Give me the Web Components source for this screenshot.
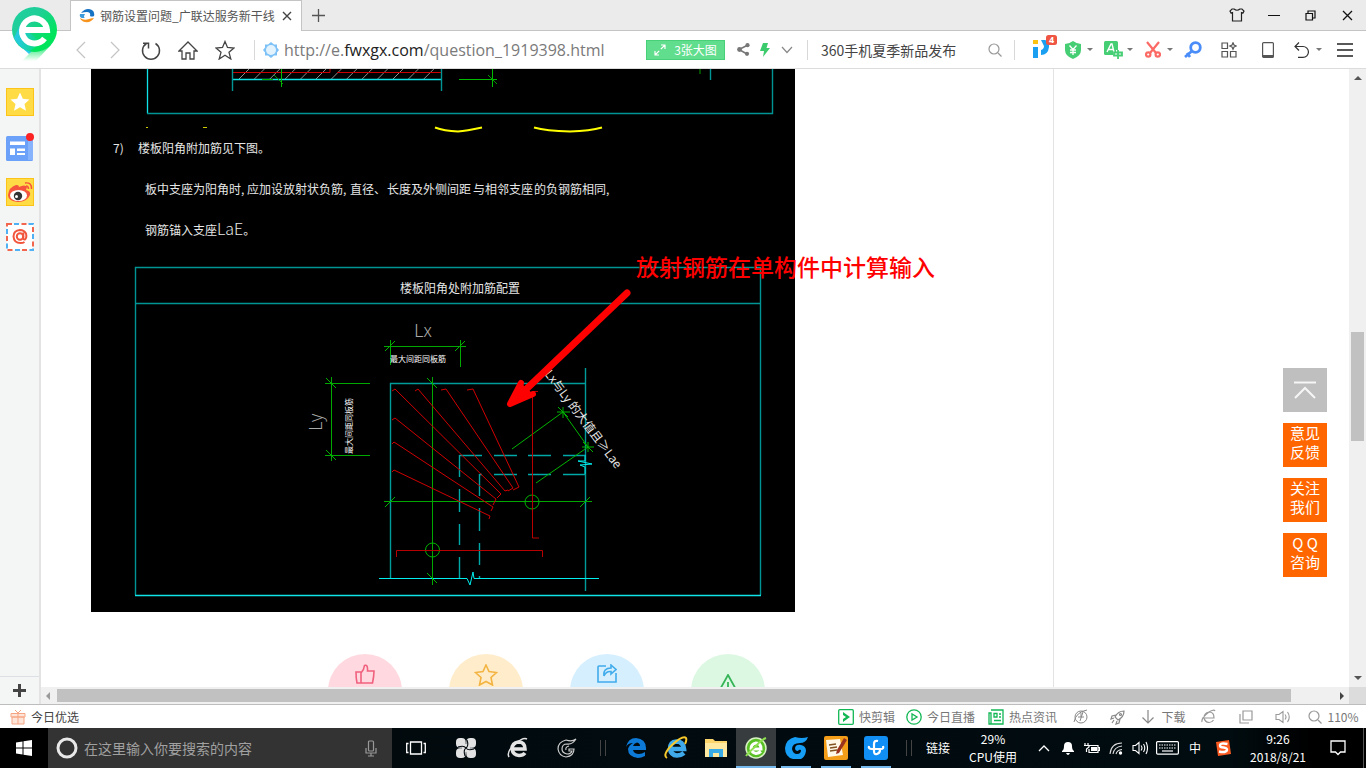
<!DOCTYPE html>
<html lang="zh-CN">
<head>
<meta charset="utf-8">
<title>钢筋设置问题_广联达服务新干线</title>
<style>
html,body{margin:0;height:100%}
body{font:12px/16px "Noto Sans CJK SC",sans-serif;color:#444;overflow:hidden}
</style>
</head>
<body>
<browser-app></browser-app>
<script>
const define = (name, html, init) => customElements.define(name, class extends HTMLElement {
  connectedCallback() {
    if (this.shadowRoot) return;
    const root = this.attachShadow({ mode: 'open' });
    const t = document.createElement('template');
    t.innerHTML = html;
    root.append(t.content.cloneNode(true));
    if (init) init(this, root);
  }
});

const line = (c, w, d) => `<g fill="none" stroke="${c}" stroke-width="${w}">${d}</g>`;
/* name: [width, height, markup] */
const ICONS = {
  logo: [45, 55, `<defs><linearGradient id="a" x1="0" y1="0" x2="1" y2="1"><stop offset="0" stop-color="#1fd0a0"/><stop offset=".35" stop-color="#1fce98"/><stop offset=".75" stop-color="#00e45c"/></linearGradient><linearGradient id="b" x1="0" y1="0" x2="0" y2="1"><stop offset=".2" stop-color="#00e45c"/><stop offset="1" stop-color="#fff"/></linearGradient><linearGradient id="c" x1="0" y1="0" x2="1" y2="0"><stop offset="0" stop-color="#25c9e8"/><stop offset="1" stop-color="#25c9e8" stop-opacity="0"/></linearGradient></defs><path d="M5 36L17 47 38 36z" fill="#2cc8f0"/><path d="M10 54L26 38 42 32 38 39 24 54z" fill="url(#b)"/><circle cx="22.500" cy="22.500" r="22.500" fill="url(#a)"/><path d="M2 31Q5 37 10 41L16 45 30 36 8 18z" fill="url(#c)"/><path d="M13 23H35A12.500 12.500 0 1 0 32.500 31.500" fill="none" stroke="#fff" stroke-width="6"/>`],
  fav: [16, 14, `<path d="M2 4Q7-2 13 1 16 3 15 7 13 8 11 7 12 3 8 3 5 3 2 4z" fill="#1673c4"/><path d="M1 5H6Q4 8 6 9H3Q0 8 1 5z" fill="#3c9adb"/><path d="M1 9Q5 12 10 10 13 9 15 9 12 14 6 13 2 12 1 9z" fill="#f7941e"/>`],
  close: [10, 10, line('#444', 1.4, '<path d="M1 1L9 9M9 1L1 9"/>')],
  plus: [13, 13, line('#555', 1.3, '<path d="M6.500 0V13M0 6.500H13"/>')],
  shirt: [16, 14, line('#222', 1.2, '<path d="M5 1Q8 3.500 11 1H13L15 3 14 5 12.500 4.500V13H3.500V4.500L2 5 1 3 3 1z"/>')],
  min: [12, 12, line('#111', 1, '<path d="M0 6.500H12"/>')],
  restore: [11, 11, line('#111', 1.2, '<path d="M1 3.500H7.500V10H1zM3 3.500V1H10V8H7.500"/>')],
  winclose: [11, 11, line('#111', 1.3, '<path d="M1 1L10 10M10 1L1 10"/>')],
  back: [10, 18, line('#c4c4c4', 1.2, '<path d="M9 1L1 9 9 17"/>')],
  forward: [10, 18, line('#c4c4c4', 1.2, '<path d="M1 1L9 9 1 17"/>')],
  reload: [20, 20, line('#444', 1.5, '<path d="M14.500 3.500A8.500 8.500 0 1 1 5.500 3.500M2 3.200H7.500V8.500"/>')],
  home: [20, 20, line('#444', 1.3, '<path d="M1 11L10 2 19 11H16V19H12V13H8V19H4V11z"/>')],
  star: [20, 20, line('#444', 1.3, '<path d="M10 1.500L12.500 7.500 19 8 14 12.300 15.800 19 10 15.300 4.200 19 6 12.300 1 8 7.500 7.500z"/>')],
  site: [16, 16, `<path d="M8 0L11 2.500 14 2.500 14 5.500 16 8 14 10.500 14 13.500 11 13.500 8 16 5 13.500 2 13.500 2 10.500 0 8 2 5.500 2 2.500 5 2.500z" fill="#7dc1f7"/><circle cx="8" cy="8" r="5" fill="#e2f3fe"/>`],
  expand: [12, 12, line('#fff', 1.2, '<path d="M7 1H11V5M11 1L6.800 5.200M5 11H1V7M1 11L5.200 6.800"/>')],
  share: [13, 13, `<path d="M2 6.500L11 2M2 6.500L10 11" stroke="#777" stroke-width="1.500"/><circle cx="2.500" cy="6.500" r="2.400" fill="#777"/><circle cx="10.500" cy="2.200" r="2.100" fill="#777"/><circle cx="10" cy="10.800" r="2.100" fill="#777"/>`],
  bolt: [10, 14, `<path d="M3 0H8L6.500 5H10L3 14 4 8H0z" fill="#3ccb6c"/>`],
  chevron: [12, 8, line('#888', 1.2, '<path d="M1 1L6 6.500 11 1"/>')],
  search: [14, 14, line('#999', 1.2, '<circle cx="6" cy="6" r="5"/><path d="M10 10L13.500 13.500"/>')],
  caret: [6, 4, `<path d="M0 0H6L3 3z" fill="#777"/>`],
  ipt: [24, 24, `<path d="M0 5H5V9H0z" fill="#fdc110"/><path d="M0 12H5V23H0zM8 5H12Q17 6 16 12 15 20 8 20V15Q11 14 11 11z" fill="#1a9ff1"/><rect x="13" y="0" width="11" height="10" rx="2.500" fill="#ef5542"/>`],
  shield: [18, 18, `<path d="M9 0Q13 3 17 3V9Q17 15 9 18 1 15 1 9V3Q5 3 9 0z" fill="#45ce74"/>` + line('#fff', 1.3, '<path d="M5.500 4.500L9 8.500 12.500 4.500M9 8.500V14M6 9H12M6 11.500H12"/>')],
  trans: [19, 18, `<rect x="0" y="0" width="14" height="14" rx="1.500" fill="#45ce74"/>` + line('#fff', 1.4, '<path d="M3 11L7 3H8L10 11M4.500 8.500H9.500"/>') + line('#fff', 4, '<path d="M9 13H19M14 9V18"/>') + line('#45ce74', 1.8, '<path d="M10 11.500H18V14.500H10zM14 9V18"/>')],
  cut: [16, 17, line('#fb6a64', 2.2, '<path d="M2 1L11 12M14 1L5 12"/><circle cx="3.200" cy="13.500" r="2.200"/><circle cx="12.800" cy="13.500" r="2.200"/>')],
  key: [18, 18, line('#4a8df8', 2.8, '<circle cx="11.500" cy="6.500" r="4.800"/><path d="M8 10L1 16M3 12L6 16"/>')],
  grid: [16, 16, line('#555', 1.2, '<path d="M1 1H6.500V6.500H1zM1 9.500H6.500V15H1zM9.500 9.500H15V15H9.500z"/><path d="M12 .8L13 3 15.200 4 13 5 12 7.200 11 5 8.800 4 11 3z"/>')],
  phone: [12, 16, line('#555', 1.2, '<rect x=".6" y=".6" width="10.800" height="14.800" rx="1"/>') + '<path d="M1 13H11V15.500H1z" fill="#555"/>'],
  undo: [16, 16, line('#333', 1.2, '<path d="M5 .5L1 4.500 5 8.500M1 4.500H9A5 5 0 0 1 9 15.400H4"/>')],
  menu: [16, 14, line('#222', 1.3, '<path d="M0 1H16M0 7H16M0 13H16"/>')],
  sstar: [28, 28, `<rect x=".5" y=".5" width="27" height="27" fill="#ffdb45" stroke="#fcc419"/><path d="M14 4.500L16.800 10.800 23.500 11.500 18.500 16 20 22.800 14 19.200 8 22.800 9.500 16 4.500 11.500 11.200 10.800z" fill="#fff"/>`],
  snews: [28, 28, `<rect y="3" width="27" height="25" rx="1.500" fill="#6ba1f8"/><path d="M22 3H27V27H22z" fill="#86b3fb"/><path d="M4 8.500H19V12H4zM4 15.500H9V22H4zM11 15.500H19V18H11zM11 20H19V22H11z" fill="#fff"/><circle cx="24" cy="4" r="4" fill="#fb2323"/>`],
  sweibo: [28, 28, `<rect x=".5" y=".5" width="27" height="27" fill="#ffdb45" stroke="#fcc419"/><path d="M2 17Q3 9 10 7 13 6.500 13 9 19 6 21 9L20 12Q25 13 24 17 21 24 12 24 2 23 2 17z" fill="#f5553d"/><ellipse cx="12.500" cy="17.500" rx="8.500" ry="5.500" fill="#fff"/><circle cx="12" cy="18" r="4.200" fill="#333"/><circle cx="10.500" cy="18.500" r="1.500" fill="#fff"/>` + line('#f5553d', 1.500, '<path d="M20 8Q22.500 8 22.500 11M19 5Q26 4 25.500 11"/>')],
  smail: [28, 28, `<rect x="1" y="1" width="26" height="26" fill="#fff"/><g fill="none" stroke-width="2"><rect x="1" y="1" width="26" height="26" stroke="#f1664d" stroke-dasharray="5 9.500"/><rect x="1" y="1" width="26" height="26" stroke="#4fb0f3" stroke-dasharray="5 9.500" stroke-dashoffset="-7"/></g>` + line('#f1553c', 2, '<circle cx="14" cy="13.500" r="3.200"/><path d="M17.300 9.500V15Q17.500 17 19 16.500 21 15 20 10.500 18 7 14 7 7.500 7.500 7.500 13.500 8 20 14.500 20 17 20 18.500 19"/>')],
  bigplus: [13, 13, line('#444', 3, '<path d="M6.500 0V13M0 6.500H13"/>')],
  top: [22, 18, line('#f6f6f6', 2, '<path d="M0 1.500H22M1 17L11 7 21 17"/>')],
  thumb: [20, 20, line('#f0607e', 1.6, '<path d="M1 8H6V19H2Q1 14 1 8zM6 9Q9 6 9.500 1.500 13 0 12.500 7H19Q19 12 17.500 19H6"/>')],
  cstar: [24, 22, line('#f3b441', 1.6, '<path d="M12 1L15 7.500 22.500 8.500 17 13.500 18.500 21 12 17.500 5.500 21 7 13.500 1.500 8.500 9 7.500z"/>')],
  cshare: [20, 20, line('#41acec', 1.6, '<path d="M9 2H2Q1 2 1 3V18H19V9M14 1L19 5.500 14 10V7.500Q9 7 7 12 6 4 14 4z"/>')],
  warn: [22, 20, line('#35b558', 1.8, '<path d="M11 1L21 19H1zM11 8V14"/>')],
  gift: [16, 16, `<path d="M1 4.500H15V8H1zM2 8H14V15H2z" fill="#fde5da" stroke="#f6a583"/><path d="M8 4V15M8 4L5 1M8 4L11 1" stroke="#f6a583" fill="none"/>`],
  kuai: [16, 16, line('#12b755', 1.3, '<rect x=".7" y=".7" width="14.600" height="14.600" rx="1"/>') + '<path d="M5 3L12 8 5 13V10L8 8 5 6z" fill="#12b755"/>'],
  live: [16, 16, line('#12b755', 1.3, '<circle cx="8" cy="8" r="7.200"/><path d="M6 5V11L11 8z"/>')],
  news: [16, 16, line('#12b755', 1.3, '<path d="M3 1H15V15H1V4H3V15M6 4.500H9V8H6zM11 5H13M11 8H13M6 11.500H13"/>')],
  speed: [16, 16, line('#888', 1, '<circle cx="8" cy="8" r="6"/><path d="M1 13Q3 3 14 1M8 4V8H5M8 8L11 8M10 3L7 12"/>')],
  rocket: [16, 16, line('#888', 1.2, '<path d="M14 2Q8 2 5 8L8 11Q14 8 14 2zM6 6L2 7 1 10 4 9M10 10L9 14 6 15 7 12M4 11L2 14"/><circle cx="10.500" cy="5.500" r="1"/>')],
  down: [16, 16, line('#888', 1.2, '<path d="M8 1V14M2.500 8.500L8 14 13.500 8.500"/>')],
  eline: [16, 16, line('#999', 1.2, '<path d="M4 9H13Q13 3 8 3 3 4 3 9 4 13 8 13.500 11 13.500 12.500 11M1 13Q0 9 8 3 13 0 14 2"/>')],
  windows: [14, 14, line('#999', 1.2, '<path d="M4 1H13V10H4zM1 4V13H10"/>')],
  sound: [16, 14, line('#999', 1.1, '<path d="M1 4.500H4L8 1.500V12.500L4 9.500H1zM10 4.500Q12 7 10 9.500M12.500 2Q16 7 12.500 12"/>')],
  win: [16, 16, `<path d="M0 2.500L6.500 1.500V7.500H0zM7.500 1.300L16 0V7.500H7.500zM0 8.500H6.500V14.500L0 13.500zM7.500 8.500H16V16L7.500 14.700z" fill="#fff"/>`],
  ring: [22, 22, line('#e8e8e8', 3, '<circle cx="11" cy="11" r="9"/>')],
  mic: [12, 17, line('#999', 1.2, '<rect x="3.500" y="1" width="5" height="10" rx="1"/><path d="M1 8V13H11V8M6 13V16M3 16H9"/>')],
  task: [20, 14, line('#fff', 1.3, '<path d="M4.500 1H15.500V13H4.500zM2.500 2.500H.7V11.500H2.500M17.500 2.500H19.300V11.500H17.500"/>')],
  pinwheel: [22, 22, `<g fill="#e3e3e3"><rect x="1" y="1" width="9.700" height="9.700" rx="4"/><rect x="11.300" y="1" width="9.700" height="9.700" rx="4"/><rect x="1" y="11.300" width="9.700" height="9.700" rx="4"/><rect x="11.300" y="11.300" width="9.700" height="9.700" rx="4"/><circle cx="11" cy="11" r="4"/></g><path d="M3 10Q9 8 11 11 13 14 19 12M12 3Q14 9 11 11 8 13 10 19" stroke="#02090d" stroke-width="1.100" fill="none"/>`],
  ewhite: [22, 22, line('#e4e4e4', 3.6, '<path d="M5.500 12H18Q18 5 11.500 5 5 6 5 12 6 18 12 18.500 16 18.500 18 16"/>') + line('#e4e4e4', 1.5, '<path d="M2 20Q-1 15 8 7 16 0 20 2"/>')],
  gline: [20, 20, line('#ccc', 1.2, '<path d="M19 1Q15 4 9 2 1 4 1 11 2 18 9 19 17 18 17 11H12V13H15Q14 16 10 16 5 15 5 11 5 6 10 6 15 7 19 1zM12 8Q8 9 9 12"/>')],
  edge: [20, 20, `<path d="M0 9Q2 0 10 0 20 1 20 10V12H7Q8 16 13 16 16 16 19 14V18Q15 20 12 20 2 19 2 11 3 7 7 5 2 5 0 9zM7 8H14Q14 5 11 4.500 8 5 7 8z" fill="#0d7ad8" fill-rule="evenodd"/>`],
  ie: [24, 24, line('#3fa9ea', 4.6, '<path d="M6 13H20Q19 5.500 12.500 5.500 6 6 6 13 7 19 13 19.500 17 19.500 20 17"/>') + line('#f7c92c', 2, '<path d="M3 22Q-2 19 8 9 19-1 22 2 23 4 21 8"/>')],
  folder: [22, 20, `<path d="M0 1H8L10 3H22V18H0z" fill="#fbd56b"/><path d="M0 5H22V19H0z" fill="#ffe9a1"/><path d="M4 11H18V19H14V15H8V19H4z" fill="#38abe6"/>`],
  e360: [22, 22, `<circle cx="11" cy="11" r="10" fill="#58bf24" stroke="#d7f2c3" stroke-width="1.500"/>` + line('#fff', 3, '<path d="M6 12H16Q16 6 11 6 6 7 6 12 7 16 11 16.500 14 16 16 14.500"/>') + line('#8de04f', 2, '<path d="M1 19Q4 15 11 9 16 3 21 1"/>')],
  gblue: [24, 24, `<path d="M24 1Q22 7 16 7 8 7 8 13 9 18 13 18 17 18 17 14 15 13 14 15 11 15 11 12 12 8 17 9 22 10 22 15 21 21 17 23L9 23Q1 21 1 12 2 3 11 1 18 3 24 1z" fill="#169df5"/>`],
  notes: [24, 24, `<rect width="24" height="24" rx="2" fill="#f49d19"/><path d="M2 4L16 3 19 19 4 21z" fill="#fff8e7"/>` + line('#83531f', 1.5, '<path d="M5 9L12 8M6 12L13 11M6 15L13 14"/>') + '<path d="M20 2L23 4 15 17 12 18 13 14z" fill="#9b321b"/>'],
  plusblue: [24, 24, `<rect width="24" height="24" rx="3" fill="#118ff4"/>` + line('#fff', 2.2, '<path d="M14 5Q10 4 10 8V15Q10 19 13 18 16 17 16 14M5 10Q4 13 8 13H17Q20 13 19 10"/>')],
  up: [12, 7, line('#fff', 1.3, '<path d="M1 6L6 1 11 6"/>')],
  bell: [14, 14, `<path d="M1 10Q3 9 3 5 3 1 7 1 11 1 11 5 11 9 13 10V11H1zM5 12H9Q8 14 7 14 6 14 5 12z" fill="#fff"/>`],
  battery: [16, 12, line('#fff', 1.2, '<path d="M5 3.500H14V10.500H5V7M14 5.500H15.500V8.500H14M1 1V3M4 1V3M0 3.500H5V5L2.500 7V10"/>') + '<path d="M7 5H13V9H7z" fill="#fff"/>'],
  wifi: [14, 14, line('#ddd', 1.1, '<path d="M1 13Q2 2 13 2M4 13Q5 6 13 5M7 13Q8 9 13 8.500"/>') + '<circle cx="11.500" cy="12" r="1.700" fill="#fff"/>'],
  soundw: [16, 14, line('#fff', 1.1, '<path d="M1 4.500H3.500L7 1.500V12.500L3.500 9.500H1zM9 4.500Q11 7 9 9.500M11.500 3Q14 7 11.500 11M14 1Q17 7 14 13"/>')],
  keyboard: [23, 14, line('#fff', 1.2, '<rect x=".6" y=".6" width="21.800" height="12.500" rx="1"/><path d="M3 4H20M3 7H20" stroke-dasharray="1.500 1"/><path d="M6 10H17"/>')],
  sogou: [16, 16, `<path d="M1 2L14 0 16 14 3 16z" fill="#fb5a20"/>` + line('#fff', 2.4, '<path d="M12.500 4Q5 2.500 5 5.500 5 7.500 8.500 7.500 12.500 8 12 10 11 13 4 11.500"/>')],
  notif: [16, 16, line('#fff', 1.3, '<path d="M1 1H15V12H10.500L8 14.500 5.500 12H1z"/>')],
};
customElements.define('ui-icon', class extends HTMLElement {
  connectedCallback() {
    if (this.shadowRoot) return;
    const [w, h, d] = ICONS[this.getAttribute('name')];
    this.attachShadow({ mode: 'open' }).innerHTML =
      `<style>:host{display:inline-flex;flex:none}svg{display:block}</style><svg width="${w}" height="${h}" viewBox="0 0 ${w} ${h}" aria-hidden="true">${d}</svg>`;
  }
});

const BASE = `:host,*{box-sizing:border-box}button{font:inherit;color:inherit;background:none;border:0;padding:0;margin:0;display:flex;align-items:center;justify-content:center;flex:none}a{color:inherit;text-decoration:none}input{font:inherit;border:0;background:none;padding:0;margin:0;outline:0;min-width:0}`;

define('browser-app', `<style>
:host{display:grid;grid-template-rows:31px 38px 1fr 24px 40px;height:100vh;position:relative;background:#fff}
main{display:flex;min-height:0;min-width:0}
.logo{position:absolute;left:12px;top:7px}
</style>
<tab-strip></tab-strip><tool-bar></tool-bar><main><side-bar></side-bar><page-view></page-view></main><status-bar></status-bar><task-bar></task-bar>
<ui-icon class="logo" name="logo"></ui-icon>`);

define('tab-strip', `<style>${BASE}
:host{display:flex;background:#ebebeb;border-bottom:1px solid #c4c4c4;padding-left:70px}
.tab{display:flex;align-items:center;width:232px;height:31px;background:#fff;border:1px solid #c4c4c4;border-bottom:0;padding:0 8px}
.tab a{flex:1;padding-left:5px;color:#555;white-space:nowrap}
.tab button{width:12px}
.new{width:33px}
.win{margin-left:auto;display:flex}.win button{width:37px}
</style>
<div class="tab"><ui-icon name="fav"></ui-icon><a href="#">钢筋设置问题_广联达服务新干线</a><button aria-label="关闭标签"><ui-icon name="close"></ui-icon></button></div>
<button class="new" aria-label="新标签"><ui-icon name="plus"></ui-icon></button>
<div class="win"><button aria-label="皮肤"><ui-icon name="shirt"></ui-icon></button><button aria-label="最小化"><ui-icon name="min"></ui-icon></button><button aria-label="还原"><ui-icon name="restore"></ui-icon></button><button aria-label="关闭"><ui-icon name="winclose"></ui-icon></button></div>`);

define('tool-bar', `<style>${BASE}
:host{display:flex;align-items:center;background:#fff;border-bottom:1px solid #dcdcdc;padding:0 11px 0 64px}
.b34{width:34px}.b37{width:37px}.b22{width:22px}
.sep{width:1px;height:20px;background:#d8d8d8;flex:none}
.s1{margin:0 8px 0 11px}
.url{flex:1;font:16px/24px "Open Sans","Noto Sans",sans-serif;color:#7a7a7a;padding-left:5px;white-space:nowrap;overflow:hidden;outline:0}
.url b{font-weight:400;color:#222}
.big{width:79px;height:20px;background:#60dd8d;border:1px solid #48d079;color:#fff;gap:8px;margin-right:7px}
.find{display:flex;align-items:center;margin:0 7px 0 13px}
.find input{width:162px;font-size:14px;line-height:20px;height:24px;color:#444}.find button{width:24px}
.s2{margin-left:9px}
.ipt{position:relative;width:36px;height:30px;margin-left:12px;justify-content:flex-end;padding-right:6px}
.ipt{align-items:flex-start}
.badge{position:absolute;right:6px;top:0;width:11px;font:bold 9px/10px "Noto Sans",sans-serif;color:#fff;text-align:center}
.drop{width:40px;justify-content:flex-start;gap:4px}
.drop span{width:20px;display:flex;justify-content:center}
</style>
<button class="b34" aria-label="后退"><ui-icon name="back"></ui-icon></button><button class="b34" aria-label="前进"><ui-icon name="forward"></ui-icon></button><button class="b37" aria-label="刷新"><ui-icon name="reload"></ui-icon></button><button class="b37" aria-label="主页"><ui-icon name="home"></ui-icon></button><button class="b37" aria-label="收藏"><ui-icon name="star"></ui-icon></button>
<span class="sep s1"></span><ui-icon name="site"></ui-icon>
<div class="url" role="textbox" contenteditable="true" spellcheck="false" aria-label="地址">http://e.<b>fwxgx.com</b>/question_1919398.html</div>
<button class="big"><ui-icon name="expand"></ui-icon>3张大图</button>
<button class="b22" aria-label="分享"><ui-icon name="share"></ui-icon></button><button class="b22" aria-label="极速模式"><ui-icon name="bolt"></ui-icon></button><button class="b22" aria-label="更多"><ui-icon name="chevron"></ui-icon></button>
<span class="sep s2"></span>
<div class="find"><input aria-label="搜索" value="360手机夏季新品发布"><button aria-label="搜索"><ui-icon name="search"></ui-icon></button></div>
<span class="sep"></span>
<button class="ipt" aria-label="通知 4"><ui-icon name="ipt"></ui-icon><span class="badge">4</span></button>
<button class="drop" aria-label="网购"><span><ui-icon name="shield"></ui-icon></span><ui-icon name="caret"></ui-icon></button>
<button class="drop" aria-label="翻译"><span><ui-icon name="trans"></ui-icon></span><ui-icon name="caret"></ui-icon></button>
<button class="drop" aria-label="截图"><span><ui-icon name="cut"></ui-icon></span><ui-icon name="caret"></ui-icon></button>
<button class="drop" style="width:36px" aria-label="登录管家"><span><ui-icon name="key"></ui-icon></span></button>
<button class="drop" style="width:39px" aria-label="扩展"><span><ui-icon name="grid"></ui-icon></span></button>
<button class="drop" style="width:34px" aria-label="手机"><span><ui-icon name="phone"></ui-icon></span></button>
<button class="drop" style="width:43px" aria-label="恢复"><span><ui-icon name="undo"></ui-icon></span><ui-icon name="caret"></ui-icon></button>
<button class="drop" style="width:20px" aria-label="菜单"><span><ui-icon name="menu"></ui-icon></span></button>`);

define('side-bar', `<style>${BASE}
:host{display:flex;flex-direction:column;align-items:center;width:41px;flex:none;background:#f4f6f6;border-right:2px solid #e3e3e3;padding-top:19px;gap:17px}
.add{margin-top:auto;width:100%;height:28px;border-top:1px solid #dcdfe3}
</style>
<button aria-label="收藏夹"><ui-icon name="sstar"></ui-icon></button><button aria-label="新闻"><ui-icon name="snews"></ui-icon></button><button aria-label="微博"><ui-icon name="sweibo"></ui-icon></button><button aria-label="邮箱"><ui-icon name="smail"></ui-icon></button>
<button class="add" aria-label="添加"><ui-icon name="bigplus"></ui-icon></button>`);

define('page-view', `<style>${BASE}
:host{display:grid;grid-template:1fr 17px / 1fr 17px;flex:1;min-width:0}
.page{position:relative;overflow:hidden;display:flex;min-height:0}
article{width:1013px;flex:none;border-right:1px solid #e3e3e3;padding-left:50px}
cad-drawing{display:block}
.acts{display:flex;gap:47px;padding:42px 0 0 237px}
.acts button{width:74px;height:74px;border-radius:50%;align-items:flex-start;padding-top:10px}
.float{position:absolute;right:22px;bottom:110px;display:flex;flex-direction:column;gap:11px;color:#fff;font-size:15px;line-height:19px;text-align:center}
.float a,.float button{width:44px;height:44px;display:flex;flex-direction:column;background:#f60;align-items:center}
.float button{background:#bfbfbf;justify-content:center}
.v,.h{background:#f0f0f0;display:flex;align-items:center}
.v{flex-direction:column;padding:7px 0}.v i,.h i{background:#c1c1c1;flex:109}
.v i{width:13px}.h{padding:0 5px}.h i{height:13px;flex:1233;margin-left:7px}
.v::before,.v::after,.h::before,.h::after{content:"";border:4px solid transparent;flex:none}
.v::before{border-top:0;border-bottom:4px solid #555}.v::after{border-bottom:0;border-top:4px solid #555}
.h::before{border-left:0;border-right:4px solid #999}.h::after{border-right:0;border-left:4px solid #444}
.s{flex:251}.e{flex:234}.he{flex:49}
.c{background:#dcdcdc}
</style>
<div class="page"><article><cad-drawing></cad-drawing>
<div class="acts"><button style="background:#ffd9df" aria-label="赞"><ui-icon name="thumb"></ui-icon></button><button style="background:#ffeccb" aria-label="收藏"><ui-icon name="cstar"></ui-icon></button><button style="background:#d5efff" aria-label="分享"><ui-icon name="cshare"></ui-icon></button><button style="background:#dcf8e2;padding-top:20px" aria-label="举报"><ui-icon name="warn"></ui-icon></button></div></article>
<nav class="float"><button aria-label="返回顶部"><ui-icon name="top"></ui-icon></button><a href="#"><span>意见</span><span>反馈</span></a><a href="#"><span>关注</span><span>我们</span></a><a href="#"><span>Q Q</span><span>咨询</span></a></nav></div>
<div class="v"><span class="s"></span><i></i><span class="e"></span></div>
<div class="h"><i></i><span class="he"></span></div><div class="c"></div>`);

/* Drawing units equal page pixels; slashes are dimension ticks. */
const tick = (x, y, s = 1) => `M${x - 5} ${y + 5 * s}L${x + 5} ${y - 5 * s}`;
let hatch = '';
for (let x = 239; x < 430; x += 15.4) hatch += `M${x} 79L${x + 10} 69`;
define('cad-drawing', `<style>svg{display:block}text{font-family:"Noto Sans CJK SC",sans-serif;fill:#e6e6e6}.s{font-size:8px;fill:#fff}.t{font-size:18px;font-weight:300;fill:#aaa}.m{font-size:12px}</style>
<svg width="860" height="543" viewBox="91 69 860 543" role="img" aria-label="楼板阳角处附加筋配置">
<rect x="91" y="69" width="704" height="543"/>
<g fill="none">
<path d="${hatch}" stroke="#909090"/>
<path d="M232 72.500H330V69M337 72.500H442" stroke="#c80000"/>
<path d="M147.500 69V113.500M232 79.500H442" stroke="#10e4e8" stroke-width="1.300"/>
<path d="M147 113.500H772.500V69M232.500 69V91M441.500 69V91M710.500 69V80" stroke="#009494" stroke-width="1.400"/>
<path d="M281.500 69V87M459 79.500H497M492.500 69V87M262 79.500H273" stroke="#0b0"/>
<path d="M274 75L283 84M488 75L497 84M700 69V74" stroke="#090"/>
<path d="M435 127.500Q444 131 458 131.500 466 131 482 127.500M534 127.500Q546 131 570 131.500 590 131 602 127.500" stroke="#ff0" stroke-width="2"/>
<path d="M146 127.500H148M203 127.500H207" stroke="#cc0"/>
<path d="M135.500 595V267.500H760.500V595M135 303.500H760" stroke="#009494" stroke-width="1.400"/>
<path d="M135 595.500H761" stroke="#10e4e8" stroke-width="1.300"/>
<path d="M390.500 578V383.500H585M585.500 368V591" stroke="#009c9c" stroke-width="1.400"/>
<path d="M379 578.500H467L470 585 473 572 474 578.500H599M585 455V461L578 461 592 464 580 465 585 467V474" stroke="#0ee"/>
<path d="M459.500 455.500H482M494 455.500H517M528 455.500H551M563 455.500H585M479.500 474.500H482M494 474.500H517M528 474.500H551M563 474.500H585M459.500 455V477M459.500 489V512M459.500 524V545M459.500 557V578M479.500 474V496M479.500 508V531M479.500 543V565M479.500 576V578" stroke="#00a8a8" stroke-width="1.400"/>
<path d="M390.500 340V365M384 346.500H466M460.500 340V367M325 383.500H370M325 455.500H370M331.500 377V461M432.500 377V585M384 501.500H592" stroke="#00a800"/>
<g stroke="#00b400"><path d="${tick(390, 346)}${tick(460, 346)}${tick(331, 383, -1)}${tick(331, 455, -1)}${tick(432, 383, -1)}${tick(432, 578, -1)}${tick(390, 502)}${tick(585, 502)}"/><circle cx="432.500" cy="550" r="7"/><circle cx="532" cy="502" r="7"/><path d="M512 449L563 412 588 447 536 483M557 412H570M558 407L568 417M563 407V418M582 447H594M583 442L593 452M588 442V452"/></g>
<path d="M396.500 557V550.500H542.500V557M532.500 538V391.500H538M532.500 538H539" stroke="#b80000"/>
<g stroke="#d00000"><path d="M392 391L395 389 501 494M415 391L418 389 505 491 508 490M441 390L446 389 513 488 508 491M467 390L473 389 519 487 513 490M392 420L395 418 496 499M392 444L394 442 493 507 491 511M392 472L394 470 490 516 489 519M501 494L497 498M496 499L493 505"/></g>
</g>
<text class="m" y="153"><tspan x="113">7)</tspan><tspan x="138">楼板阳角附加筋见下图。</tspan></text>
<text class="m" y="194"><tspan x="145">板中支座为阳角时,</tspan><tspan x="247">应加设放射状负筋,</tspan><tspan x="350">直径、</tspan><tspan x="387">长度及外侧间距</tspan><tspan x="473">与相邻支座</tspan><tspan x="534">的负钢筋相同,</tspan></text>
<text class="m" x="145" y="235">钢筋锚入支座<tspan font-size="16" font-weight="300">LaE</tspan>。</text>
<text class="m" x="400" y="293">楼板阳角处附加筋配置</text>
<text class="t" x="414" y="337">Lx</text><text class="s" x="390" y="362">最大间距同板筋</text>
<text class="t" transform="translate(322 431) rotate(-90)">Ly</text><text class="s" transform="translate(352 454) rotate(-90)">最大间距同板筋</text>
<g transform="translate(544 374) rotate(53)"><text class="m">Lx与Ly 的大值且≥Lae</text></g>
<path d="M627 293L518 397" stroke="#f00" stroke-width="7" stroke-linecap="round"/><path d="M521 383L510 404 533 394" fill="#f00" stroke="#f00" stroke-width="6" stroke-linejoin="round" stroke-linecap="round"/>
<text x="636" y="276" style="font-size:23px;font-weight:500;fill:#f00">放射钢筋在单构件中计算输入</text>
</svg>`);

define('status-bar', `<style>${BASE}
:host{display:flex;align-items:center;background:#fff;border-top:1px solid #bdbdbd;padding-left:10px;color:#777}
a,button{display:flex;align-items:center;gap:5px;flex:none;white-space:nowrap}
button{width:37px}.day{color:#444;margin-right:auto}
</style>
<a class="day" href="#"><ui-icon name="gift"></ui-icon>今日优选</a>
<a style="width:68px" href="#"><ui-icon name="kuai"></ui-icon>快剪辑</a><a style="width:82px" href="#"><ui-icon name="live"></ui-icon>今日直播</a><a style="width:74px" href="#"><ui-icon name="news"></ui-icon>热点资讯</a>
<button aria-label="加速"><ui-icon name="speed"></ui-icon></button><button aria-label="清理"><ui-icon name="rocket"></ui-icon></button><button style="width:54px"><ui-icon name="down"></ui-icon>下载</button><button aria-label="内核"><ui-icon name="eline"></ui-icon></button><button aria-label="窗口"><ui-icon name="windows"></ui-icon></button><button aria-label="声音"><ui-icon name="sound"></ui-icon></button><button style="width:65px"><ui-icon name="search"></ui-icon>110%</button>`);

define('task-bar', `<style>${BASE}
:host{display:flex;background:linear-gradient(90deg,#02090d 0,#010c10 90%,#000 96%);color:#fff;min-width:0}
.start{width:48px;background:#000}
.q{display:flex;align-items:center;width:344px;flex:none;background:#333;padding:0 15px 0 8px;gap:6px}
.q input{flex:1;font-size:14px;height:24px;color:#a0a0a0}
button{width:40px}.on{border-bottom:2px solid #76b9ed;margin:0 5px;width:30px;padding-top:2px}
.act{background:#373d3f;margin:0;width:40px}
.bar{display:flex;width:26px;flex:none;justify-content:center;align-items:center}
.bar::before{content:"";width:4px;height:16px;border:1px solid #444;border-width:0 1px}
.tray{display:flex;margin-left:auto}.col{flex-direction:column;line-height:18px}
.edge{width:10px}.edge::before{width:1px;height:40px;border:0;background:#555}
</style>
<button class="start" aria-label="开始"><ui-icon name="win"></ui-icon></button>
<label class="q"><ui-icon name="ring"></ui-icon><input value="在这里输入你要搜索的内容" aria-label="搜索"><ui-icon name="mic"></ui-icon></label>
<button style="width:48px" aria-label="任务视图"><ui-icon name="task"></ui-icon></button><button style="width:52px" aria-label="应用"><ui-icon name="pinwheel"></ui-icon></button><button style="width:52px" aria-label="浏览器"><ui-icon name="ewhite"></ui-icon></button><button style="width:46px" aria-label="广联达"><ui-icon name="gline"></ui-icon></button><span class="bar"></span>
<button aria-label="Edge"><ui-icon name="edge"></ui-icon></button><button aria-label="IE"><ui-icon name="ie"></ui-icon></button><button aria-label="文件"><ui-icon name="folder"></ui-icon></button><button class="on act" aria-label="360浏览器"><ui-icon name="e360"></ui-icon></button><button class="on" aria-label="广联达"><ui-icon name="gblue"></ui-icon></button><button class="on" aria-label="笔记"><ui-icon name="notes"></ui-icon></button><button class="on" aria-label="助手"><ui-icon name="plusblue"></ui-icon></button>
<div class="tray"><span class="bar"></span><button style="width:32px">链接</button><button class="col" style="width:78px"><span>29%</span><span>CPU使用</span></button>
<button style="width:24px" aria-label="展开"><ui-icon name="up"></ui-icon></button><button style="width:24px" aria-label="通知"><ui-icon name="bell"></ui-icon></button><button style="width:24px" aria-label="电池"><ui-icon name="battery"></ui-icon></button><button style="width:24px" aria-label="网络"><ui-icon name="wifi"></ui-icon></button><button style="width:24px" aria-label="音量"><ui-icon name="soundw"></ui-icon></button><button style="width:30px" aria-label="键盘"><ui-icon name="keyboard"></ui-icon></button><button style="width:26px">中</button><button style="width:30px" aria-label="搜狗"><ui-icon name="sogou"></ui-icon></button><button class="col" style="width:80px"><span>9:26</span><span>2018/8/21</span></button><button style="width:40px" aria-label="操作中心"><ui-icon name="notif"></ui-icon></button><span class="bar edge"></span></div>`);
</script>
</body>
</html>
